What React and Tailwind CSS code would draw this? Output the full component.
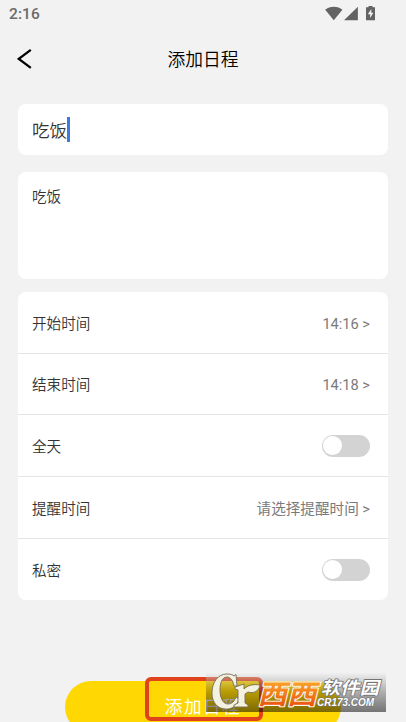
const CJK = "font-['Roboto','Noto_Sans_CJK_SC',sans-serif]";

function StatusBar() {
  return (
    <div className="flex h-7 shrink-0 items-center justify-between pl-[9px] pr-[29px] text-[#6b6b6b]">
      <span className="text-[15.5px] font-medium leading-7 tracking-[0.1px]">2:16</span>
      <svg width="52" height="16" viewBox="0 0 52 16" className="mb-px fill-[#636363]">
        <path d="M0.2 3.8 C4.5 -0.2 13.2 -0.2 17.4 3.8 L8.8 14.2 Z" />
        <path d="M32.9 0.7 V14.3 H19 Z" />
        <path
          fillRule="evenodd"
          d="M43.5 0 H47.5 V1.2 H50 V14.2 H41 V1.2 H43.5 Z M46.3 3 L42.8 8.2 H45.1 V12 L48.4 6.8 H46.3 Z"
        />
      </svg>
    </div>
  );
}

function Row({ label, value, last, height }) {
  return (
    <div
      className={`flex items-center justify-between pl-[14px] pr-[18px] ${height} ${
        last ? "" : "border-b border-[#e5e5e5]"
      }`}
    >
      <span className="pt-[4px] text-[14.6px] font-[350] text-[#333]">{label}</span>
      {value ? (
        <span className="pt-[4px] text-[14.6px] text-[#7a7a7a]">{value} &gt;</span>
      ) : (
        <span className="flex h-[22px] w-12 items-center rounded-full bg-[#d3d3d3] p-px">
          <span className="size-[19px] rounded-full bg-white" />
        </span>
      )}
    </div>
  );
}

function Watermark() {
  return (
    <svg width="180" height="40" viewBox="0 0 180 40" className="absolute left-[206px] top-[672px]">
      <defs>
        <linearGradient id="shade" x1="0" y1="0" x2="0" y2="1">
          <stop offset="0" stopColor="#000" stopOpacity="0.02" />
          <stop offset="0.5" stopColor="#000" stopOpacity="0.28" />
          <stop offset="1" stopColor="#000" stopOpacity="0.52" />
        </linearGradient>
        <linearGradient id="orange" x1="0" y1="0" x2="0" y2="1">
          <stop offset="0.2" stopColor="#fba928" />
          <stop offset="0.85" stopColor="#ea560f" />
        </linearGradient>
        <linearGradient id="veil" x1="0" y1="0" x2="0" y2="1">
          <stop offset="0" stopColor="#fff" stopOpacity="0.5" />
          <stop offset="0.5" stopColor="#fff" stopOpacity="0" />
        </linearGradient>
      </defs>
      <rect width="180" height="40" fill="url(#veil)" />
      <rect width="180" height="40" fill="url(#shade)" />
      <g fill="#f5f1df" stroke="#756d57" strokeWidth="0.9" strokeLinejoin="round">
        <path d="M30 2.5 L31 14 H28 C27 8 24 5 21 5 C16 5 14 11 14 18 C14 27 17.500 32 22 32 C26 32 28.500 29 30 25 L33 27 C31 34 26 37.500 19 37 C11 36.500 6 30 6 21 C6 10 12 2 21 2 C25 2 27 3 28 4 Z" />
        <path d="M29 15 L38 12 V17 C42 13 47 12 54 13 C53 19 48 22 42 20 L39 22 V31 L42 33 V35 H28 V33 L32 31 V18 L29 17 Z" />
      </g>
      <g fontFamily="'Noto Sans CJK SC', sans-serif" strokeLinejoin="round" paintOrder="stroke">
        <text
          transform="translate(51.5 31.5) skewX(-14)"
          fontSize="27"
          fontWeight="700"
          textLength="59"
          lengthAdjust="spacingAndGlyphs"
          fill="url(#orange)"
          stroke="#fff7e8"
          strokeWidth="2.2"
        >
          西西
        </text>
        <text
          transform="translate(115 22) skewX(-14)"
          fontSize="17.5"
          fontWeight="700"
          textLength="58"
          lengthAdjust="spacingAndGlyphs"
          fill="#fff"
          stroke="#747474"
          strokeWidth="1.6"
        >
          软件园
        </text>
      </g>
      <text
        x="111"
        y="33.5"
        fontFamily="'Liberation Sans', sans-serif"
        fontSize="10"
        fontWeight="700"
        fontStyle="italic"
        textLength="57"
        lengthAdjust="spacingAndGlyphs"
        fill="#fff"
        stroke="#707070"
        strokeWidth="1.2"
        paintOrder="stroke"
      >
        CR173.COM
      </text>
    </svg>
  );
}

export default function App() {
  return (
    <div className={`relative flex h-[722px] w-[406px] flex-col overflow-hidden bg-[#f2f2f2] ${CJK}`}>
      <StatusBar />
      <header className="grid h-[62px] shrink-0 grid-cols-[1fr_auto_1fr] items-center px-[17px]">
        <svg width="16" height="22" viewBox="0 0 16 22" className="fill-none stroke-black stroke-[2.3]">
          <path d="M13.800 1.800 L1.800 10.800 L13.800 19.800" />
        </svg>
        <h1 className="pt-[2px] text-[17.8px] font-[350] leading-6 text-black">添加日程</h1>
      </header>

      <main className="flex shrink-0 flex-col px-[18px] pt-[14px]">
        <div className="flex h-[51px] items-center rounded-lg bg-white pl-[14px]">
          <span className="pt-[3px] text-[17.6px] font-[350] text-[#333]">吃饭</span>
          <span className="h-[25px] w-[3px] bg-[#3a7be0]" />
        </div>
        <div className="mt-[17px] h-[107px] rounded-lg bg-white px-[14px] pt-[13px] text-[14.6px] font-[350] leading-6 text-[#333]">
          吃饭
        </div>
        <section className="mt-[13px] flex flex-col rounded-lg bg-white">
          <Row label="开始时间" value="14:16" height="h-[62px]" />
          <Row label="结束时间" value="14:18" height="h-[61px]" />
          <Row label="全天" height="h-[62px]" />
          <Row label="提醒时间" value="请选择提醒时间" height="h-[62px]" />
          <Row label="私密" height="h-[61px]" last />
        </section>
      </main>

      <button className="ml-[65px] mt-[81px] flex h-[52px] w-[276px] shrink-0 items-center justify-center rounded-full bg-[#ffd803] text-[17.6px] tracking-[1.5px] text-white">
        添加日程
      </button>

      <div className="absolute left-[145px] top-[677px] h-[44px] w-[118px] rounded-md border-4 border-[#e0431b]" />
      <Watermark />
    </div>
  );
}
